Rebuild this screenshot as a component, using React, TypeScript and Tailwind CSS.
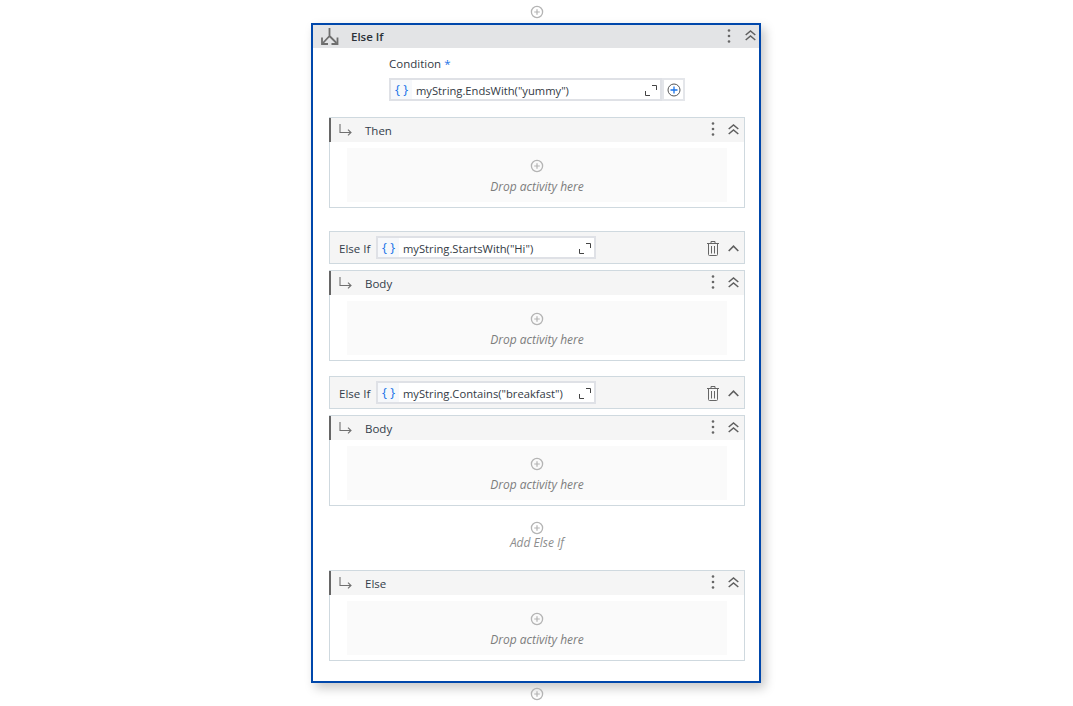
const font = "font-['Open_Sans',sans-serif]";

function PlusCircle({ className = "" }: { className?: string }) {
  return (
    <svg width="14" height="14" viewBox="0 0 14 14" fill="none" className={className}>
      <circle cx="7" cy="7" r="5.6" stroke="#b4b4b4" strokeWidth="1.3" />
      <path d="M7 4.2v5.6M4.2 7h5.6" stroke="#b4b4b4" strokeWidth="1.2" />
    </svg>
  );
}

function Dots() {
  return (
    <svg width="4" height="14" viewBox="0 0 4 14" fill="#666">
      <circle cx="2" cy="1.5" r="1.3" />
      <circle cx="2" cy="7" r="1.3" />
      <circle cx="2" cy="12.5" r="1.3" />
    </svg>
  );
}

function DoubleUp() {
  return (
    <svg width="11" height="11" viewBox="0 0 11 11" fill="none" stroke="#5f5f5f" strokeWidth="1.5">
      <path d="M.7 5 5.5 1l4.8 4M.7 10l4.8-4 4.8 4" />
    </svg>
  );
}

function BentArrow() {
  return (
    <svg width="13" height="12" viewBox="0 0 13 12" fill="none" stroke="#707070" strokeWidth="1.1">
      <path d="M1 0v8.5h11M9 5.7l3 2.8-3 2.8" />
    </svg>
  );
}

function Expand() {
  return (
    <svg width="12" height="11" viewBox="0 0 12 11" fill="none" stroke="#444" strokeWidth="1">
      <path d="M7 .5h4.5V5M.5 6v4.5H5" />
    </svg>
  );
}

function Trash() {
  return (
    <svg width="12" height="15" viewBox="0 0 12 15" fill="none" stroke="#666" strokeWidth="1">
      <path d="M0 2.5h12M4 2.5V.5h4v2M1.5 2.5v11a1 1 0 0 0 1 1h7a1 1 0 0 0 1-1v-11M4.5 5v7.5M7.5 5v7.5" />
    </svg>
  );
}

function BlockIcon() {
  return (
    <svg width="18" height="17" viewBox="0 0 18 17" fill="none" stroke="#6e6e6e" strokeWidth="1.8">
      <path d="M8.5 0v8L2 15M8.5 8l7 7" />
      <path d="M1 9.5V16h6M16.5 9.5V16h-6" />
    </svg>
  );
}

function Expression({ text, width }: { text: string; width: string }) {
  return (
    <div className={`${width} h-[23px] flex items-center border-2 border-[#dfe1e6] bg-white`}>
      <div className="w-[21px] h-full bg-[#f6f8fb] flex items-center justify-center text-[13px] text-[#1a73e8] shrink-0">
        {"{ }"}
      </div>
      <span className="ml-[4px] mt-[4px] flex-1 text-[11.2px] text-[#333a45] whitespace-nowrap">{text}</span>
      <div className="mr-[3px] mt-[2px]"><Expand /></div>
    </div>
  );
}

function DropZone({ label }: { label: string }) {
  return (
    <div className="flex flex-col items-center pt-[2px]">
      <PlusCircle />
      <span className="mt-[7px] text-[12px] leading-[14px] italic text-[#7d7d7d]">{label}</span>
    </div>
  );
}

function Section({ title }: { title: string }) {
  return (
    <div className="w-[416px] h-[91px] border border-[#cfd9df] bg-white flex flex-col">
      <div className="h-[24px] bg-[#f5f5f5] border-l-2 border-[#666] -ml-px flex items-center pl-2 pr-[5px] shrink-0">
        <BentArrow />
        <span className="ml-[13px] mt-[2px] text-[11.5px] font-medium text-[#333d4a] flex-1">{title}</span>
        <div className="-mt-[2px] flex items-center">
          <Dots />
          <div className="ml-[13px]"><DoubleUp /></div>
        </div>
      </div>
      <div className="flex-1 mx-[17px] mt-[6px] mb-[5px] bg-[#fafafa] flex items-center justify-center">
        <DropZone label="Drop activity here" />
      </div>
    </div>
  );
}

function ElseIfRow({ text }: { text: string }) {
  return (
    <div className="w-[416px] h-[33px] border border-[#cfd9df] bg-[#f5f5f5] flex items-center pl-[9px] pr-[5px]">
      <span className="mt-[2px] text-[11.5px] font-medium text-[#333d4a] w-[37px] whitespace-nowrap">Else If</span>
      <Expression text={text} width="w-[220px]" />
      <div className="ml-auto mt-[2px] flex items-center">
        <Trash />
        <svg width="11" height="7" viewBox="0 0 11 7" fill="none" stroke="#5f5f5f" strokeWidth="1.6" className="ml-[9px]">
          <path d="M.7 6 5.5 1.2 10.3 6" />
        </svg>
      </div>
    </div>
  );
}

export default function App() {
  return (
    <div className={`${font} w-[1073px] h-[706px] bg-white overflow-hidden flex flex-col items-center`}>
      <div className="h-[23px] flex items-center justify-center pl-px shrink-0"><PlusCircle /></div>
      <div className="w-[450px] h-[660px] -ml-[1px] border-2 border-[#0047ab] shadow-[4px_5px_10px_rgba(0,0,0,0.22)] bg-white shrink-0 flex flex-col">
        <div className="h-[23px] bg-[#e3e4e6] flex items-center pl-[8px] pr-[3px] shrink-0">
          <BlockIcon />
          <span className="ml-[12px] text-[11.5px] font-semibold text-[#2b3138] flex-1">Else If</span>
          <div className="-mt-[2px] flex items-center">
            <Dots />
            <div className="ml-[14px]"><DoubleUp /></div>
          </div>
        </div>
        <div className="pl-[76px] mt-[7px]">
          <div className="text-[11.5px] leading-[17px] text-[#333a45]">
            Condition <span className="text-[#1a73e8]">*</span>
          </div>
          <div className="mt-[6px] flex">
            <Expression text={'myString.EndsWith("yummy")'} width="w-[273px]" />
            <div className="w-[23px] h-[23px] border-2 border-[#e4e6ea] flex items-center justify-center">
              <svg width="14" height="14" viewBox="0 0 14 14" fill="none">
                <circle cx="7" cy="7" r="6" stroke="#555" strokeWidth="1" />
                <path d="M7 3.5v7M3.5 7h7" stroke="#1a73e8" strokeWidth="1.3" />
              </svg>
            </div>
          </div>
        </div>
        <div className="ml-[16px] mt-[16px] flex flex-col">
          <Section title="Then" />
          <div className="mt-[23px]"><ElseIfRow text={'myString.StartsWith("Hi")'} /></div>
          <div className="mt-[6px]"><Section title="Body" /></div>
          <div className="mt-[15px]"><ElseIfRow text={'myString.Contains("breakfast")'} /></div>
          <div className="mt-[6px]"><Section title="Body" /></div>
          <div className="mt-[15px] flex flex-col items-center w-[416px]">
            <PlusCircle />
            <span className="mt-[1px] text-[12px] leading-[14px] italic text-[#8e8e8e]">Add Else If</span>
          </div>
          <div className="mt-[20px]"><Section title="Else" /></div>
        </div>
      </div>
      <div className="mt-[4px] pl-px"><PlusCircle /></div>
    </div>
  );
}
